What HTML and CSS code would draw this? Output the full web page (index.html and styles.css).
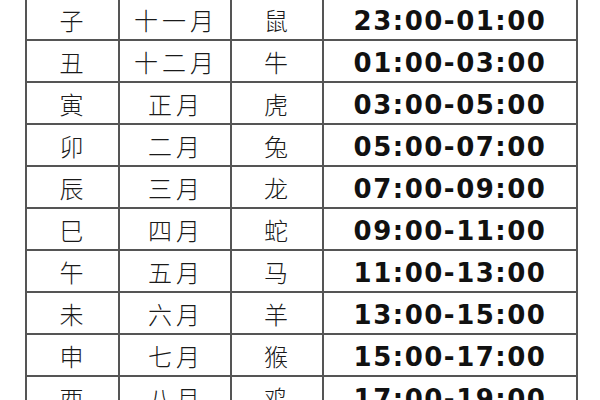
FILE: index.html
```html
<!DOCTYPE html>
<html lang="zh">
<head>
<meta charset="utf-8">
<link rel="stylesheet" href="styles.css">
</head>
<body>
<table class="chart">
  <colgroup>
    <col class="c-branch">
    <col class="c-month">
    <col class="c-animal">
    <col class="c-time">
  </colgroup>
  <tbody>
    <tr><td class="zh">子</td><td class="zh">十一月</td><td class="zh">鼠</td><td class="time">23:00-01:00</td></tr>
    <tr><td class="zh">丑</td><td class="zh">十二月</td><td class="zh">牛</td><td class="time">01:00-03:00</td></tr>
    <tr><td class="zh">寅</td><td class="zh">正月</td><td class="zh">虎</td><td class="time">03:00-05:00</td></tr>
    <tr><td class="zh">卯</td><td class="zh">二月</td><td class="zh">兔</td><td class="time">05:00-07:00</td></tr>
    <tr><td class="zh">辰</td><td class="zh">三月</td><td class="zh">龙</td><td class="time">07:00-09:00</td></tr>
    <tr><td class="zh">巳</td><td class="zh">四月</td><td class="zh">蛇</td><td class="time">09:00-11:00</td></tr>
    <tr><td class="zh">午</td><td class="zh">五月</td><td class="zh">马</td><td class="time">11:00-13:00</td></tr>
    <tr><td class="zh">未</td><td class="zh">六月</td><td class="zh">羊</td><td class="time">13:00-15:00</td></tr>
    <tr><td class="zh">申</td><td class="zh">七月</td><td class="zh">猴</td><td class="time">15:00-17:00</td></tr>
    <tr><td class="zh">酉</td><td class="zh">八月</td><td class="zh">鸡</td><td class="time">17:00-19:00</td></tr>
  </tbody>
</table>
</body>
</html>
```
FILE: styles.css
```css
html, body {
  margin: 0;
  padding: 0;
  background: #ffffff;
  overflow: hidden;
}
body {
  width: 600px;
  height: 400px;
}
.chart {
  border-collapse: collapse;
  table-layout: fixed;
  margin-left: 25px;
  margin-top: -3px;
  width: 551px;
}
.c-branch { width: 93px; }
.c-month { width: 112px; }
.c-animal { width: 92px; }
.c-time { width: 254px; }
.chart td {
  border: 2px solid #555555;
  height: 36px;
  padding: 0;
  text-align: center;
  vertical-align: middle;
  color: #1a1a1a;
  line-height: 30px;
}
.chart td.zh {
  font-family: "Noto Sans CJK SC", sans-serif;
  font-weight: 300;
  font-size: 24px;
  letter-spacing: 4px;
  text-indent: 2px;
  padding: 3px 0 1px;
}
.chart td.time {
  font-family: "DejaVu Sans", Verdana, sans-serif;
  font-weight: bold;
  font-size: 26px;
  letter-spacing: 1.5px;
  color: #111111;
  padding: 4px 0 0;
}
```
